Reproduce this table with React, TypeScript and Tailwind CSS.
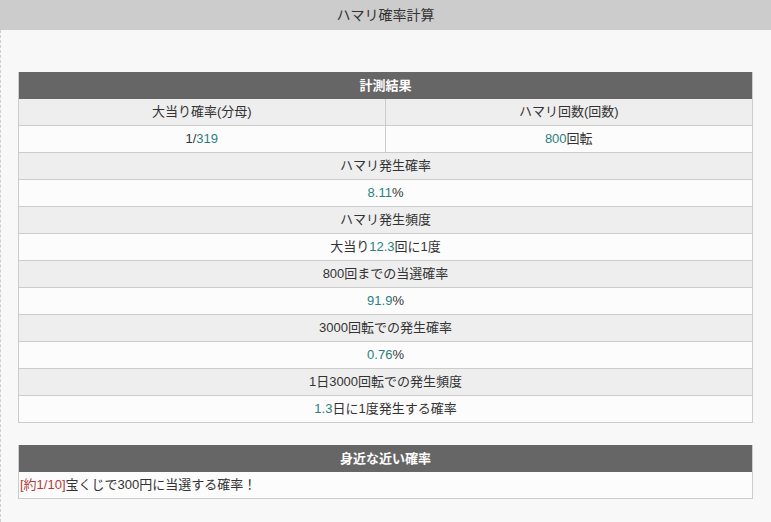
import React from "react";

const T = ({ children }: { children: React.ReactNode }) => (
  <span className="text-[#2a8080]">{children}</span>
);

const Row = ({ children, gray }: { children: React.ReactNode; gray?: boolean }) => (
  <div
    className={`h-[27px] flex items-center justify-center border-b border-[#cccccc] ${
      gray ? "bg-[#eeeeee]" : "bg-[#fcfcfc]"
    }`}
  >
    {children}
  </div>
);

export default function App() {
  return (
    <div
      className="w-[771px] h-[522px] bg-[#f8f8f8] text-[13px] text-[#333333] overflow-hidden"
      style={{ fontFamily: '"Liberation Sans", "Noto Sans CJK JP", sans-serif' }}
    >
      <div className="h-[30px] bg-[#cccccc] flex items-center justify-center text-[14px] text-[#333333]">
        ハマリ確率計算
      </div>
      <div className="h-[492px] border-l border-dashed border-[#cfcfcf] pl-[17px] pr-[18px] pt-[42px]">
        <div className="border-l border-r border-[#cccccc]">
          <div className="h-[27px] bg-[#666666] text-white font-bold flex items-center justify-center">
            計測結果
          </div>
          <div className="grid grid-cols-2 h-[27px] bg-[#eeeeee] border-b border-[#cccccc]">
            <div className="flex items-center justify-center border-r border-[#cccccc]">大当り確率(分母)</div>
            <div className="flex items-center justify-center">ハマリ回数(回数)</div>
          </div>
          <div className="grid grid-cols-2 h-[27px] bg-[#fcfcfc] border-b border-[#cccccc]">
            <div className="flex items-center justify-center border-r border-[#cccccc]">
              1/<T>319</T>
            </div>
            <div className="flex items-center justify-center">
              <T>800</T>回転
            </div>
          </div>
          <Row gray>ハマリ発生確率</Row>
          <Row>
            <T>8.11</T>%
          </Row>
          <Row gray>ハマリ発生頻度</Row>
          <Row>
            大当り<T>12.3</T>回に1度
          </Row>
          <Row gray>800回までの当選確率</Row>
          <Row>
            <T>91.9</T>%
          </Row>
          <Row gray>3000回転での発生確率</Row>
          <Row>
            <T>0.76</T>%
          </Row>
          <Row gray>1日3000回転での発生頻度</Row>
          <Row>
            <T>1.3</T>日に1度発生する確率
          </Row>
        </div>
        <div className="mt-[22px] border-l border-r border-[#cccccc]">
          <div className="h-[27px] bg-[#666666] text-white font-bold flex items-center justify-center">
            身近な近い確率
          </div>
          <div className="h-[27px] bg-[#fcfcfc] border-b border-[#cccccc] flex items-center px-[1px]">
            <span className="text-[#b03a3a]">[約1/10]</span>宝くじで300円に当選する確率！
          </div>
        </div>
      </div>
    </div>
  );
}
